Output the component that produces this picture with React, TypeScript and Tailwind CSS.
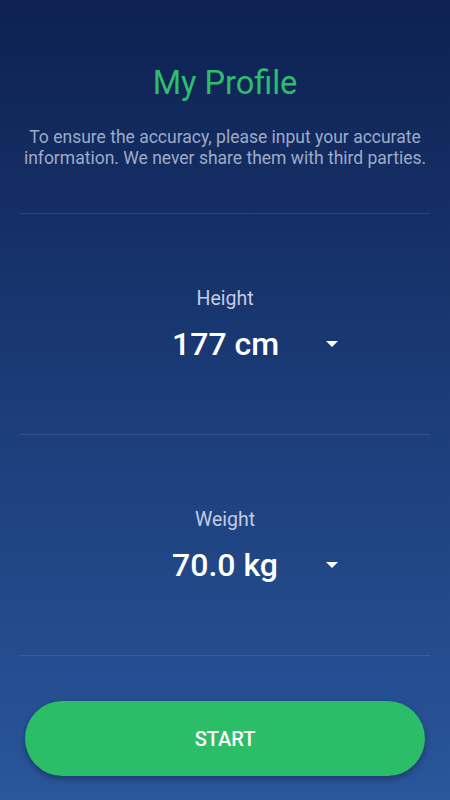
import React from 'react';

interface Field {
  label: string;
  value: string;
}

const fields: Field[] = [
  { label: 'Height', value: '177 cm' },
  { label: 'Weight', value: '70.0 kg' },
];

const Caret: React.FC = () => (
  <svg width="12" height="6" viewBox="0 0 12 6" className="shrink-0">
    <path d="M0 0 L12 0 L6 6 Z" fill="#ffffff" />
  </svg>
);

const App: React.FC = () => {
  return (
    <div
      className="min-h-[800px] w-full flex flex-col bg-gradient-to-b from-[#0e2151] via-[#1b3c78] to-[#2a569b] text-white"
      style={{ fontFamily: 'Roboto, "Noto Sans", sans-serif' }}
    >
      {/* Header */}
      <div className="px-5 pt-[62px]">
        <h1 className="text-center text-[32.5px] leading-[42px] text-[#2dbe6b]">My Profile</h1>
        <p className="mt-[23px] text-center text-[17.5px] leading-[21px] text-[#9eabc7]">
          To ensure the accuracy, please input your accurate information. We never share them with third parties.
        </p>
        <div className="mt-[44px] h-px bg-white/10" />
      </div>

      {/* Fields */}
      {fields.map((f) => (
        <div key={f.label} className="px-5">
          <div className="h-[220px] flex flex-col pt-[72px]">
            <div className="text-center text-[19.5px] leading-[26px] text-[#c3cce2]">{f.label}</div>
            <div className="mt-[11px] flex items-center justify-center pl-[60px]">
              <span className="w-[154px] text-[32px] leading-[42px] font-medium">{f.value}</span>
              <Caret />
            </div>
          </div>
          <div className="h-px bg-white/10" />
        </div>
      ))}

      {/* Button */}
      <div className="px-[25px] pt-[45px]">
        <button className="w-full h-[75px] rounded-full bg-[#2cbd69] text-[20px] font-medium text-white shadow-[0_3px_6px_rgba(0,0,0,0.3)]">
          START
        </button>
      </div>
    </div>
  );
};

export default App;
